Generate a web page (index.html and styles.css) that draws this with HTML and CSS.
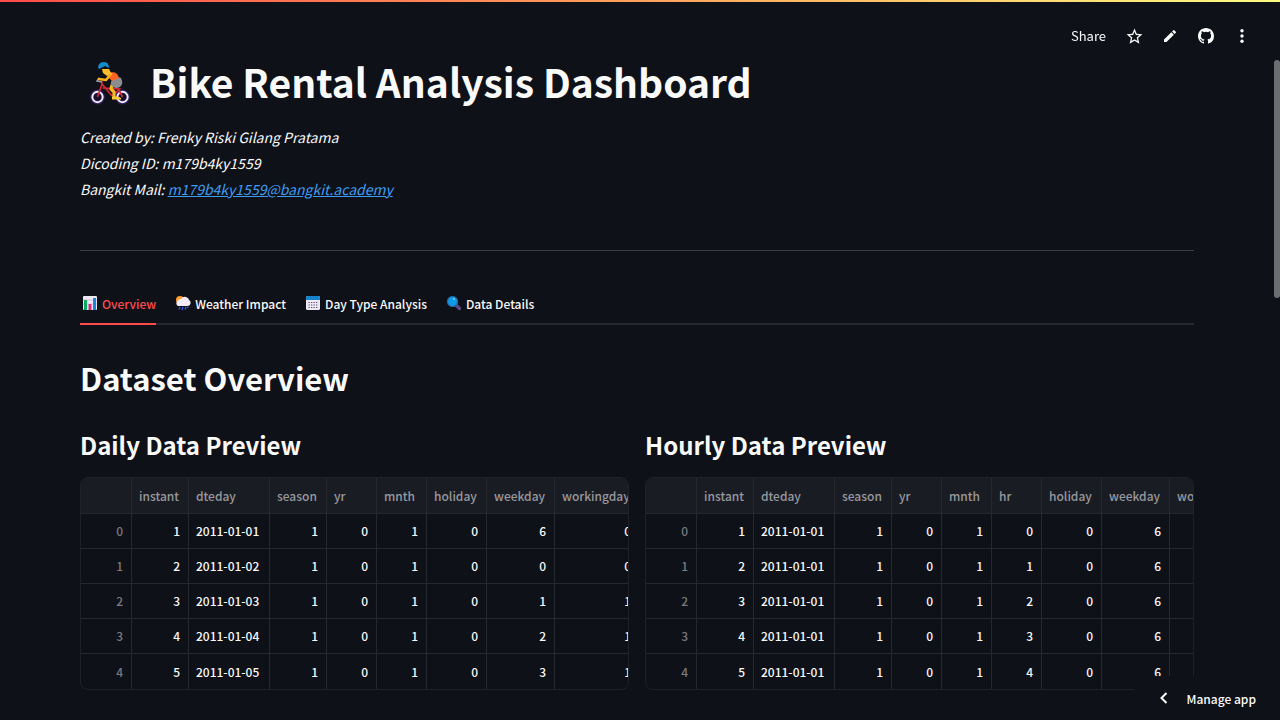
FILE: index.html
```html
<!DOCTYPE html>
<html lang="en">
<head>
<meta charset="utf-8">
<title>Bike Rental Analysis Dashboard</title>
<link rel="stylesheet" href="styles.css">
</head>
<body>
<div class="rainbow"></div>
<header class="toolbar">
  <button class="share" type="button">Share</button>
  <button class="tool" type="button" aria-label="Favorite"><svg viewBox="0 0 24 24" width="19" height="19"><path fill="currentColor" d="m22 9.24-7.19-.62L12 2 9.19 8.63 2 9.24l5.46 4.73L5.82 21 12 17.27 18.18 21l-1.63-7.03L22 9.24zM12 15.4l-3.76 2.27 1-4.28-3.32-2.88 4.38-.38L12 6.1l1.71 4.04 4.38.38-3.32 2.88 1 4.28L12 15.4z"/></svg></button>
  <button class="tool" type="button" aria-label="Edit"><svg viewBox="0 0 24 24" width="16" height="16"><path fill="currentColor" d="M3 17.25V21h3.75L17.81 9.94l-3.75-3.75L3 17.25zM20.71 7.04a1 1 0 0 0 0-1.41l-2.34-2.34a1 1 0 0 0-1.41 0l-1.83 1.83 3.75 3.75 1.83-1.83z"/></svg></button>
  <button class="tool" type="button" aria-label="GitHub"><svg viewBox="0 0 16 16" width="16" height="16"><path fill="currentColor" d="M8 0C3.58 0 0 3.58 0 8c0 3.54 2.29 6.53 5.47 7.59.4.07.55-.17.55-.38 0-.19-.01-.82-.01-1.49-2.01.37-2.53-.49-2.69-.94-.09-.23-.48-.94-.82-1.13-.28-.15-.68-.52-.01-.53.63-.01 1.08.58 1.23.82.72 1.21 1.87.87 2.33.66.07-.52.28-.87.51-1.07-1.78-.2-3.64-.89-3.64-3.95 0-.87.31-1.59.82-2.15-.08-.2-.36-1.02.08-2.12 0 0 .67-.21 2.2.82a7.6 7.6 0 0 1 4 0c1.53-1.04 2.2-.82 2.2-.82.44 1.1.16 1.92.08 2.12.51.56.82 1.27.82 2.15 0 3.07-1.87 3.75-3.65 3.95.29.25.54.73.54 1.48 0 1.07-.01 1.93-.01 2.2 0 .21.15.46.55.38A8.01 8.01 0 0 0 16 8c0-4.42-3.58-8-8-8z"/></svg></button>
  <button class="tool" type="button" aria-label="Menu"><svg viewBox="0 0 20 20" width="20" height="20" fill="currentColor"><circle cx="10" cy="4.800" r="1.700"/><circle cx="10" cy="10" r="1.700"/><circle cx="10" cy="15.200" r="1.700"/></svg></button>
</header>

<main class="page">
  <h1 class="title">
    <svg class="cyclist" viewBox="0 0 44 44" width="44" height="44" aria-hidden="true">
      <g fill="#15122c" stroke="#32205b" stroke-width="4"><circle cx="9.500" cy="36" r="5.500"/><circle cx="34.500" cy="36" r="5.500"/></g>
      <g fill="none" stroke="#f2eefa" stroke-width="1.900"><circle cx="9.500" cy="36" r="5.200"/><circle cx="34.500" cy="36" r="5.200"/></g>
      <path d="M9.500 36 14 23l10 12M14.500 27l17 1-7 7M30 27l4.500 9M14 23l-.5-3" fill="none" stroke="#d52837" stroke-width="1.700"/>
      <path d="M14 21l-5-1 2-3" fill="none" stroke="#9b9ba7" stroke-width="1.500"/>
      <path d="M24 24l-1 4 3 3v6" fill="none" stroke="#f9b625" stroke-width="3.200" stroke-linejoin="round"/>
      <path d="M24 35.500h6l3 1.500v1.500h-9z" fill="#ffc938"/>
      <path d="M25 18q6-3 8-1 3 6-1 9-4 2-7 0l-2-2q-1-3 2-6z" fill="#8c8d91"/>
      <path d="M21 12q8-3 10 5l-7 3-5-5z" fill="#ff6424"/>
      <path d="M23 13l-5 6-7-1" fill="none" stroke="#ffb01b" stroke-width="2.600" stroke-linecap="round" stroke-linejoin="round"/>
      <path d="M14 8h7l2 4-4 3-4-3z" fill="#ffbd28"/>
      <path d="M10 6q1-5 6-5 5 0 5 6l-4-2-6 3z" fill="#148cca"/>
    </svg>
    <span>Bike Rental Analysis Dashboard</span>
  </h1>
  <p class="meta">Created by: Frenky Riski Gilang Pratama<br>Dicoding ID: m179b4ky1559<br>Bangkit Mail: <a href="mailto:m179b4ky1559@bangkit.academy">m179b4ky1559@bangkit.academy</a></p>
  <hr class="rule">

  <div class="tabs" role="tablist">
    <button class="tab active" type="button" role="tab" aria-selected="true">
      <svg viewBox="0 0 16 16" width="16" height="16" aria-hidden="true"><rect x="1" y="1" width="14" height="14" rx="1" fill="#eee8f6"/><path d="M1 5h14M1 9h14" stroke="#b9aacb" stroke-width=".6"/><path fill="#0aaa60" d="M2 5h3v10H2z"/><path fill="#d52a78" d="M6.500 9h3v6h-3z"/><path fill="#1686d9" d="M11 3h3v12h-3z"/></svg>
      <span>Overview</span></button>
    <button class="tab" type="button" role="tab" aria-selected="false">
      <svg viewBox="0 0 16 16" width="16" height="16" aria-hidden="true"><circle cx="5" cy="5" r="4" fill="#ff9d24"/><path d="M3 11a3 3 0 0 1-.5-5Q3 4 6 4q2-3 5-2 3 1 3 3 2 1 1.500 3.500Q15 11 12 11z" fill="#f1ebfa"/><path d="M5 12l-1 2.500M8 12l-1 3M11 12l-1 2.500M13 11.500 12.500 13" stroke="#3558ed" stroke-width="1.300"/></svg>
      <span>Weather Impact</span></button>
    <button class="tab" type="button" role="tab" aria-selected="false">
      <svg viewBox="0 0 16 16" width="16" height="16" aria-hidden="true"><rect x="1" y="1" width="14" height="14" rx="1.500" fill="#eee9f6"/><path d="M1 5V2.500Q1 1 2.500 1h11Q15 1 15 2.500V5z" fill="#1684cb"/><path d="M3.500 7.500h9M3.500 10h9M3.500 12.500h9" stroke="#5a4a75" stroke-width="1.200" stroke-dasharray="1.300 1.200"/></svg>
      <span>Day Type Analysis</span></button>
    <button class="tab" type="button" role="tab" aria-selected="false">
      <svg viewBox="0 0 16 16" width="16" height="16" aria-hidden="true"><path d="m10 10 3.500 3.500" stroke="#5c4b88" stroke-width="3.200" stroke-linecap="round"/><circle cx="6.500" cy="6.500" r="5" fill="#0c9be9" stroke="#266ba9" stroke-width="1.200"/><circle cx="8" cy="4" r="1" fill="#77d7ff"/></svg>
      <span>Data Details</span></button>
  </div>

  <h2 class="section">Dataset Overview</h2>
  <div class="columns">
    <section class="panel">
      <h3 class="subhead">Daily Data Preview</h3>
      <div class="frame"><table class="grid">
        <colgroup><col class="c-index"><col class="c-mid"><col class="c-date"><col class="c-mid"><col class="c-small"><col class="c-small"><col class="c-holiday"><col class="c-weekday"><col class="c-working"></colgroup>
        <thead><tr><th></th><th>instant</th><th>dteday</th><th>season</th><th>yr</th><th>mnth</th><th>holiday</th><th>weekday</th><th>workingday</th></tr></thead>
        <tbody>
        <tr><th>0</th><td>1</td><td>2011-01-01</td><td>1</td><td>0</td><td>1</td><td>0</td><td>6</td><td>0</td></tr>
        <tr><th>1</th><td>2</td><td>2011-01-02</td><td>1</td><td>0</td><td>1</td><td>0</td><td>0</td><td>0</td></tr>
        <tr><th>2</th><td>3</td><td>2011-01-03</td><td>1</td><td>0</td><td>1</td><td>0</td><td>1</td><td>1</td></tr>
        <tr><th>3</th><td>4</td><td>2011-01-04</td><td>1</td><td>0</td><td>1</td><td>0</td><td>2</td><td>1</td></tr>
        <tr><th>4</th><td>5</td><td>2011-01-05</td><td>1</td><td>0</td><td>1</td><td>0</td><td>3</td><td>1</td></tr>
        </tbody></table></div>
    </section>
    <section class="panel">
      <h3 class="subhead">Hourly Data Preview</h3>
      <div class="frame"><table class="grid">
        <colgroup><col class="c-index"><col class="c-mid"><col class="c-date"><col class="c-mid"><col class="c-small"><col class="c-small"><col class="c-small"><col class="c-holiday"><col class="c-weekday"><col class="c-working"></colgroup>
        <thead><tr><th></th><th>instant</th><th>dteday</th><th>season</th><th>yr</th><th>mnth</th><th>hr</th><th>holiday</th><th>weekday</th><th>workingday</th></tr></thead>
        <tbody>
        <tr><th>0</th><td>1</td><td>2011-01-01</td><td>1</td><td>0</td><td>1</td><td>0</td><td>0</td><td>6</td><td>0</td></tr>
        <tr><th>1</th><td>2</td><td>2011-01-01</td><td>1</td><td>0</td><td>1</td><td>1</td><td>0</td><td>6</td><td>0</td></tr>
        <tr><th>2</th><td>3</td><td>2011-01-01</td><td>1</td><td>0</td><td>1</td><td>2</td><td>0</td><td>6</td><td>0</td></tr>
        <tr><th>3</th><td>4</td><td>2011-01-01</td><td>1</td><td>0</td><td>1</td><td>3</td><td>0</td><td>6</td><td>0</td></tr>
        <tr><th>4</th><td>5</td><td>2011-01-01</td><td>1</td><td>0</td><td>1</td><td>4</td><td>0</td><td>6</td><td>0</td></tr>
        </tbody></table></div>
    </section>
  </div>
</main>

<div class="scroll-thumb"></div>
<button class="manage" type="button">
  <svg viewBox="0 0 20 20" width="20" height="20" aria-hidden="true"><path d="m12.500 5-5 5 5 5" fill="none" stroke="currentColor" stroke-width="2"/></svg>
  <span>Manage app</span>
</button>
</body>
</html>
```
FILE: styles.css
```css
* { box-sizing: border-box; }
body {
  margin: 0;
  overflow: hidden;
  background: #0e1117;
  color: #fafafa;
  font-family: "Noto Sans CJK SC", "Open Sans", sans-serif;
  font-size: 14px;
}
button {
  margin: 0;
  padding: 0;
  border: 0;
  background: none;
  color: inherit;
  font: inherit;
  cursor: pointer;
}
svg { display: block; flex: none; }

.rainbow {
  position: fixed;
  inset: 0 0 auto;
  height: 2px;
  background: linear-gradient(90deg, #ff4b4b, #ffa15a 50%, #fffd80);
}
.toolbar {
  position: fixed;
  top: 22px;
  right: 24px;
  display: flex;
  align-items: center;
  height: 28px;
  gap: 8px;
}
.share { font-size: 13px; line-height: 20px; margin-right: 6px; }
.tool { display: grid; place-items: center; width: 28px; height: 28px; }

.page { padding: 55px 86px 30px 80px; }
.title {
  display: flex;
  align-items: center;
  gap: 18px;
  margin: 0;
  padding-left: 8px;
  font-size: 39px;
  font-weight: 700;
  line-height: 52px;
}
.cyclist { margin-top: 4px; }
.meta {
  margin: 17px 0 0;
  font-style: italic;
  line-height: 26px;
}
.meta a { color: #3d9df3; }
.rule {
  margin: 48px 0 32px;
  border: 0;
  border-top: 1px solid #3a3c43;
}
.tabs {
  display: flex;
  gap: 17px;
  border-bottom: 2px solid #262730;
}
.tab {
  display: flex;
  align-items: center;
  gap: 4px;
  height: 42px;
  margin-bottom: -2px;
  padding-left: 2px;
  border-bottom: 2px solid transparent;
  font-size: 12px;
  font-weight: 500;
}
.tab.active { color: #ff4b4b; border-color: #ff4b4b; }

.section {
  margin: 31px 0 0;
  font-size: 31px;
  font-weight: 600;
  line-height: 44px;
}
.columns {
  display: grid;
  grid-template-columns: 1fr 1fr;
  gap: 16px;
  margin-top: 27px;
}
.panel { min-width: 0; }
.subhead {
  margin: 0 0 14px;
  font-size: 24px;
  font-weight: 600;
  line-height: 36px;
}
.frame {
  overflow: hidden;
  border: 1px solid #1f2127;
  border-radius: 8px;
}
.grid {
  table-layout: fixed;
  width: 500px;
  border-collapse: separate;
  border-spacing: 0;
  font-size: 12px;
  line-height: 20px;
}
.c-index { width: 51px; }
.c-mid { width: 57px; }
.c-date { width: 81px; }
.c-small { width: 50px; }
.c-holiday { width: 60px; }
.c-weekday { width: 68px; }
.c-working { width: 85px; }
.grid th, .grid td {
  height: 35px;
  padding: 0 8px 0 7px;
  border-right: 1px solid #262830;
  border-bottom: 1px solid #262830;
  color: #fafafa;
  font-weight: 500;
  text-align: right;
  white-space: nowrap;
}
.grid thead th {
  height: 36px;
  background: #1a1c24;
  color: #97989d;
  text-align: left;
}
.grid tbody th { color: #797b81; }
.grid td:nth-child(3) { text-align: left; }
.grid tbody tr:last-child > * { border-bottom: 0; }

.scroll-thumb {
  position: fixed;
  top: 60px;
  right: 0;
  width: 6px;
  height: 238px;
  border-radius: 3px;
  background: #6c6d70;
}
.manage {
  position: fixed;
  right: 0;
  bottom: 0;
  display: flex;
  align-items: center;
  gap: 13px;
  height: 44px;
  padding: 0 24px 0 20px;
  border-radius: 8px 0 0;
  background: #0e1117;
  font-size: 12px;
  font-weight: 500;
}
```
